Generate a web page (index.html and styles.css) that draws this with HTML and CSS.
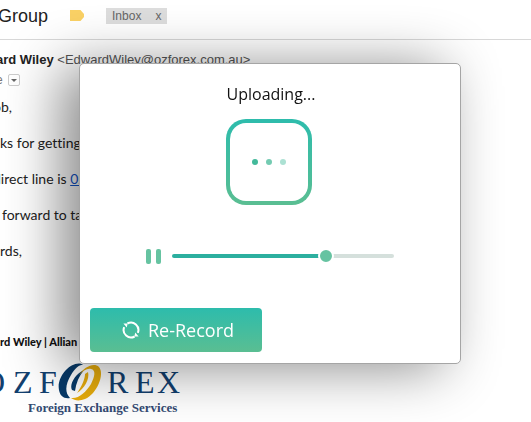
FILE: index.html
```html
<!DOCTYPE html>
<html lang="en">
<head>
<meta charset="utf-8">
<title>Uploading</title>
<link rel="stylesheet" href="styles.css">
</head>
<body>
<main class="mail">
  <header class="subject">
    <h1 class="subject-title">Group</h1>
    <svg class="marker" viewBox="0 0 14 11" aria-hidden="true"><path d="M0 0h10.500l3.500 4v3l-3.500 4H0z"/></svg>
    <span class="label"><span>Inbox</span><button class="label-remove" type="button">x</button></span>
  </header>
  <section class="message">
    <p class="sender"><strong>ard Wiley</strong> <span>&lt;EdwardWiley@ozforex.com.au&gt;</span></p>
    <p class="recipient">e <button class="details" type="button" aria-label="Show details"><svg viewBox="0 0 6 3" aria-hidden="true"><path d="M0 0h6L3 3z"/></svg></button></p>
    <div class="body">
      <p class="cut">ob,</p>
      <p>ks for getting</p>
      <p class="cut">direct line is <a href="#">02</a></p>
      <p class="indent">forward to ta</p>
      <p>rds,</p>
    </div>
    <footer class="signature">
      <p class="signature-name">rd Wiley | Allian</p>
      <svg class="logo" viewBox="0 0 190 56" role="img" aria-label="OZFOREX Foreign Exchange Services">
        <g class="logo-word">
          <text x="-18" y="34">O</text>
          <text x="13" y="34">Z</text>
          <text x="39" y="34">F</text>
          <text x="107" y="34">R</text>
          <text x="135" y="34">E</text>
          <text x="157" y="34">X</text>
        </g>
        <path class="ring-blue" d="M84 6C74 -1 56 16 59 31C60 37 64 40 70 39C64 33 66 24 71 16C75 9 80 5 84 6zM72 31C69 26 75 15 84 11C79 17 76 24 75 32z"/>
        <path class="ring-gold" d="M79 16C84 8 94 3 99 8C105 15 97 35 85 40C80 42 75 42 71 39C79 40 86 33 91 25C95 17 96 11 91 10C87 9 83 12 79 16zM88 13C90 20 84 30 77 34C82 27 85 20 85 15z"/>
        <text class="logo-tagline" x="28" y="53">Foreign Exchange Services</text>
      </svg>
    </footer>
  </section>
</main>

<div class="overlay">
  <section class="dialog" role="dialog" aria-labelledby="dialog-title">
    <h2 class="dialog-title" id="dialog-title">Uploading...</h2>
    <div class="progress" aria-hidden="true"><i></i><i></i><i></i></div>
    <div class="player">
      <button class="pause" type="button" aria-label="Pause"><i></i><i></i></button>
      <input class="seek" type="range" min="0" max="100" value="71" aria-label="Playback position">
    </div>
    <button class="record" type="button">
      <svg viewBox="0 0 18 18" aria-hidden="true">
        <path class="arc" d="M5.400 2.500A7.400 7.400 0 0 1 15.800 11.800M12.600 15.500A7.400 7.400 0 0 1 2.200 6.200"/>
        <path class="head" d="M1.400 2.400L5.600 2.600L4.800 6.600zM16.600 15.600L12.400 15.400L13.200 11.400z"/>
      </svg>
      <span>Re-Record</span>
    </button>
  </section>
</div>
</body>
</html>
```
FILE: styles.css
```css
* {
  box-sizing: border-box;
}

body {
  margin: 0;
  min-height: 100vh;
  overflow: hidden;
  background: #fff;
  font-family: "Liberation Sans", Arial, sans-serif;
  color: #222;
}

h1, h2, p {
  margin: 0;
  font-weight: normal;
}

button {
  border: 0;
  padding: 0;
  background: none;
  font: inherit;
  color: inherit;
}

.subject {
  display: flex;
  align-items: center;
  height: 40px;
  padding-bottom: 8px;
  border-bottom: 1px solid #d8d8d8;
}

.subject-title {
  font-size: 18px;
  line-height: 24px;
  margin-left: -2px;
}

.marker {
  width: 14px;
  height: 11px;
  margin: 0 22px 0 22px;
  fill: #fad165;
}

.label {
  display: flex;
  gap: 14px;
  height: 16px;
  padding: 0 6px;
  background: #ddd;
  color: #666;
  font-size: 12px;
  line-height: 16px;
}

.sender {
  margin: 11px 0 0 -4px;
  font-size: 13px;
  line-height: 18px;
  white-space: nowrap;
}

.sender span {
  color: #555;
}

.recipient {
  display: flex;
  align-items: center;
  gap: 5px;
  height: 22px;
  margin-left: -4px;
  color: #777;
  font-size: 12px;
}

.details {
  display: grid;
  place-items: center;
  width: 12px;
  height: 12px;
  border: 1px solid #ccc;
  border-radius: 2px;
  background: #fff;
}

.details svg {
  width: 6px;
  height: 3px;
  fill: #666;
}

.body {
  display: grid;
  gap: 16px;
  margin-top: 6px;
  font-family: Lato, sans-serif;
  font-size: 14px;
  font-variant-ligatures: none;
  line-height: 20px;
  white-space: nowrap;
}

.body a {
  color: #15c;
}

.cut {
  margin-left: -7px;
}

.indent {
  padding-left: 2px;
}

.signature {
  margin-top: 72px;
}

.signature-name {
  font-family: Lato, sans-serif;
  font-size: 11px;
  font-weight: 900;
  line-height: 18px;
  color: #111;
}

.logo {
  display: block;
  width: 190px;
  height: 56px;
  margin-top: 8px;
}

.logo text {
  fill: #12406f;
  font-family: "Liberation Serif", serif;
}

.logo-word {
  font-size: 32px;
}

.logo .logo-tagline {
  fill: #334a72;
  font-size: 13px;
  font-weight: bold;
}

.ring-blue {
  fill: #073a69;
}

.ring-gold {
  fill: #e8ad0c;
}

.overlay {
  position: fixed;
  inset: 0;
  display: grid;
  place-items: center;
  padding: 5px 0 0 9px;
}

.dialog {
  display: flex;
  flex-direction: column;
  align-items: center;
  width: calc(100% - 140px);
  min-width: 320px;
  padding: 18px 10px 11px;
  border: 1px solid #a5a5a5;
  border-radius: 5px;
  background: #fff;
  box-shadow: -18px 4px 56px rgba(0, 0, 0, 0.46);
  font-family: "Open Sans", "Noto Sans", sans-serif;
}

.dialog-title {
  padding-left: 2px;
  color: #111;
  font-size: 16px;
  line-height: 24px;
}

.progress {
  display: flex;
  align-items: center;
  justify-content: center;
  gap: 8px;
  width: 86px;
  height: 86px;
  margin: 13px 2px 0 0;
  border: 4px solid transparent;
  border-radius: 20px;
  background:
    linear-gradient(#fff, #fff) padding-box,
    linear-gradient(#2dbcac, #5abe92) border-box;
}

.progress i {
  width: 6px;
  height: 6px;
  border-radius: 50%;
  background: #43b99a;
}

.progress i:nth-child(2) {
  background: #74cbb2;
}

.progress i:nth-child(3) {
  background: #ace1d3;
}

.player {
  display: flex;
  align-items: center;
  gap: 11px;
  width: 69%;
  margin-top: 43px;
}

.pause {
  display: flex;
  gap: 5px;
}

.pause i {
  width: 5px;
  height: 15px;
  border-radius: 2px;
  background: #66c3a1;
}

.seek {
  flex: 1;
  min-width: 0;
  height: 16px;
  margin: 0;
  appearance: none;
  background: transparent;
}

.seek::-webkit-slider-runnable-track {
  height: 4px;
  border-radius: 2px;
  background: linear-gradient(to right, #2caf9f 70%, #d5e0dc 70%);
}

.seek::-webkit-slider-thumb {
  appearance: none;
  width: 16px;
  height: 16px;
  margin-top: -6px;
  border: 2px solid #fff;
  border-radius: 50%;
  background: #66c3a1;
}

.record {
  display: flex;
  align-items: center;
  justify-content: center;
  align-self: flex-start;
  gap: 8px;
  width: 172px;
  height: 44px;
  margin-top: 44px;
  padding-left: 4px;
  border-radius: 4px;
  background: linear-gradient(#2dbcac, #5abe92);
  color: #fff;
  font-size: 18px;
}

.record svg {
  width: 18px;
  height: 18px;
}

.arc {
  fill: none;
  stroke: #fff;
  stroke-width: 2;
}

.head {
  fill: #fff;
}
```
